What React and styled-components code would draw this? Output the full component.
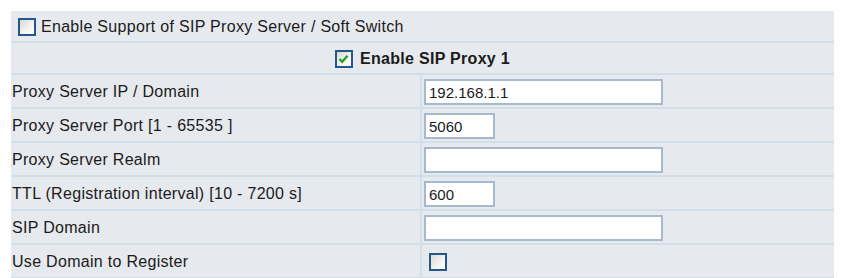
import React from 'react'
import styled, { createGlobalStyle } from 'styled-components'

const GlobalStyle = createGlobalStyle`
  html, body {
    margin: 0;
    padding: 0;
    background: #ffffff;
  }
  body {
    font-family: "Liberation Sans", Arial, sans-serif;
    color: #1b1b1b;
  }
`

const Page = styled.div`
  padding: 11px 9px 0 11px;
`

const Table = styled.div`
  width: 823px;
  background: #e6e9ee;
`

const Row = styled.div`
  display: grid;
  grid-template-columns: ${p => (p.$full ? '1fr' : '411px 1fr')};
  height: ${p => p.$h}px;
  border-bottom: 2px solid #d2dee8;
`

const Cell = styled.div`
  display: flex;
  align-items: center;
  justify-content: ${p => (p.$center ? 'center' : 'flex-start')};
  padding-left: ${p => p.$pad}px;
  padding-top: 1px;
  font-size: 16px;
  letter-spacing: 0.3px;
  font-weight: ${p => (p.$bold ? 700 : 400)};
  gap: ${p => p.$gap || 0}px;
  white-space: nowrap;
`

const Label = styled(Cell)`
  padding-left: 1px;
  border-right: 2px solid #d2dee8;
`

const Box = styled.span`
  box-sizing: border-box;
  width: 18px;
  height: 18px;
  border: 2px solid #24578a;
  background: linear-gradient(135deg, #d9d9d4 0%, #f4f4f1 60%, #ffffff 100%);
  display: inline-flex;
  align-items: center;
  justify-content: center;
  flex-shrink: 0;
`

const Field = styled.input`
  box-sizing: border-box;
  width: ${p => p.$w}px;
  height: 26px;
  border: 2px solid #a6b9cf;
  background: #ffffff;
  padding: 1px 3px 0;
  font-family: "Liberation Sans", Arial, sans-serif;
  font-size: 15px;
  color: #1b1b1b;
  outline: none;
`

const Check = ({ checked }) => (
  <Box>
    {checked && (
      <svg width="11" height="10" viewBox="0 0 11 10">
        <path d="M1.5 5 L4.2 7.8 L9.5 1.8" fill="none" stroke="#22a12a" strokeWidth="2.4" />
      </svg>
    )}
  </Box>
)

const fields = [
  { label: 'Proxy Server IP / Domain', value: '192.168.1.1', w: 239 },
  { label: 'Proxy Server Port [1 - 65535 ]', value: '5060', w: 71 },
  { label: 'Proxy Server Realm', value: '', w: 239 },
  { label: 'TTL (Registration interval) [10 - 7200 s]', value: '600', w: 71 },
  { label: 'SIP Domain', value: '', w: 239 },
]

export default function App() {
  return (
    <Page>
      <GlobalStyle />
      <Table>
        <Row $full $h={30}>
          <Cell $pad={7} $gap={5}>
            <Check />
            Enable Support of SIP Proxy Server / Soft Switch
          </Cell>
        </Row>
        <Row $full $h={30}>
          <Cell $center $bold $gap={7}>
            <Check checked />
            Enable SIP Proxy 1
          </Cell>
        </Row>
        {fields.map(f => (
          <Row key={f.label} $h={32}>
            <Label>{f.label}</Label>
            <Cell $pad={2}>
              <Field $w={f.w} defaultValue={f.value} />
            </Cell>
          </Row>
        ))}
        <Row $h={32}>
          <Label>Use Domain to Register</Label>
          <Cell $pad={7}>
            <Check />
          </Cell>
        </Row>
      </Table>
    </Page>
  )
}
